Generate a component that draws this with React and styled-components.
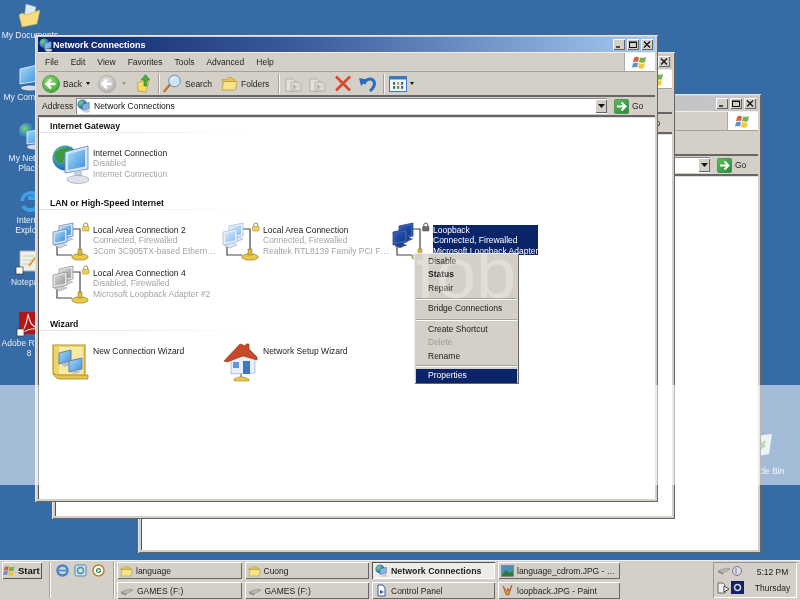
import React from 'react';
import styled, { createGlobalStyle } from 'styled-components';

const Global = createGlobalStyle`
  html, body { margin: 0; padding: 0; background: #376ba6; }
  body { width: 800px; height: 600px; overflow: hidden; font-family: "Liberation Sans", Arial, sans-serif; font-size: 8.5px; color: #111; }
  svg { flex: none; }
`;

const Page = styled.div`
  width: 800px; height: 600px; display: flex; flex-direction: column; overflow: hidden; position: relative;
  filter: blur(0.35px);
`;
const Desktop = styled.div`
  position: relative; flex: 1; background: #376ba6; overflow: hidden;
`;
const Band = styled.div`
  position: absolute; left: 0; right: 0; top: 385px; height: 100px; background: rgba(255,255,255,.55); pointer-events: none; z-index: 20;
`;
const DeskIcon = styled.div`
  position: absolute; left: ${p => p.$x}px; top: ${p => p.$y}px; width: 62px; display: flex; flex-direction: column; align-items: center;
  color: #e8eef6; font-size: 8.5px; line-height: 10px; text-align: center;
  svg { margin-bottom: ${p => p.$gap ?? 5}px; }
`;

const Frame = styled.div`
  position: absolute; left: ${p => p.$x}px; top: ${p => p.$y}px; width: ${p => p.$w}px; height: ${p => p.$h}px; z-index: ${p => p.$z};
  box-sizing: border-box; display: flex; flex-direction: column; padding: 2px 3px 3px 3px; background: #d4d0c8;
  box-shadow: inset 1px 1px 0 #e6e6e6, inset -1px -1px 0 #666;
`;
const TitleBar = styled.div`
  height: 15px; flex: none; display: flex; align-items: center; padding: 0 2px 0 1px;
  background: ${p => p.$active ? 'linear-gradient(90deg,#0a246a 0%,#3f5f9f 45%,#a6caf0 100%)' : 'linear-gradient(90deg,#a8a8a8,#c8c8c8)'};
`;
const TitleText = styled.span`
  margin-left: 0; color: #fff; font-weight: bold; font-size: 9px; flex: 1; white-space: nowrap;
`;
const CapBtn = styled.div`
  width: 12px; height: 11px; margin-left: 2px; background: #d4d0c8; display: flex; align-items: center; justify-content: center;
  box-shadow: inset 1px 1px 0 #fff, inset -1px -1px 0 #666;
`;
const MenuBar = styled.div`
  height: 20px; flex: none; display: flex; align-items: center; gap: 12px; padding-left: 7px; box-sizing: border-box; border-bottom: 1px solid #a5a29a; border-top: 1px solid #eee; color: #222;
`;
const FlagBox = styled.div`
  margin-left: auto; width: 31px; height: 100%; background: #fff; display: flex; align-items: center; justify-content: center; border-left: 1px solid #aaa; box-sizing: border-box;
`;
const Toolbar = styled.div`
  height: 25px; flex: none; display: flex; align-items: center; padding-left: 4px; box-sizing: border-box; border-bottom: 2px solid #666;
`;
const Tool = styled.div`
  display: flex; align-items: center; margin-left: ${p => p.$ml ?? 0}px; flex: none;
`;
const ToolLabel = styled.span`
  width: ${p => p.$w}px; margin-left: 3px; white-space: nowrap; color: #222;
`;
const ToolSep = styled.div`
  width: 1px; height: 20px; margin-left: ${p => p.$ml}px; background: #a5a29a; box-shadow: 1px 0 0 #f4f4f4; flex: none;
`;
const Caret = styled.div`
  width: 0; height: 0; border: 2.5px solid transparent; border-top: 3px solid ${p => p.$c || '#111'}; border-bottom: 0; margin-left: ${p => p.$ml}px; flex: none;
`;
const AddressBar = styled.div`
  height: 20px; flex: none; display: flex; align-items: center; padding-left: 4px; box-sizing: border-box; border-bottom: 2px solid #666;
`;
const AddrLabel = styled.span`
  width: 34px; color: #222;
`;
const AddrInput = styled.div`
  width: 531px; height: 16px; box-sizing: border-box; background: #fff; display: flex; align-items: center; gap: 3px; padding-left: 1px; box-shadow: inset 1px 1px 0 #888;
`;
const Combo = styled.div`
  margin-left: auto; width: 12px; height: 14px; display: flex; align-items: center; justify-content: center; background: #d4d0c8; box-shadow: inset 1px 1px 0 #fff, inset -1px -1px 0 #666;
`;
const GoWrap = styled.div`
  display: flex; align-items: center; gap: 3px; margin-left: 7px; color: #222;
`;
const Content = styled.div`
  flex: 1; min-height: 0; background: #fff; box-sizing: border-box; padding-top: 2px; border-left: 1px solid #555; border-top: 1px solid #ddd; overflow: hidden;
`;
const Section = styled.section`
  margin-bottom: ${p => p.$mb ?? 9}px;
`;
const SectionHead = styled.div`
  height: 13px; box-sizing: border-box; font-weight: bold; font-size: 8.7px; line-height: 12px; padding-left: 11px; color: #111;
  background: linear-gradient(90deg,#dfe3ea 0%,#e8ebf0 40%,#fff 100%) left bottom / 205px 1px no-repeat;
`;
const ItemGrid = styled.div`
  display: grid; grid-template-columns: repeat(3, 170px); grid-auto-rows: 43px; padding: 12px 0 0 13px;
`;
const Item = styled.div`
  display: flex; align-items: flex-start; gap: 1px; min-width: 0;
`;
const ItemText = styled.div`
  margin-top: 3px; line-height: 10.4px; white-space: nowrap; color: ${p => p.$selected ? '#fff' : '#1a1a1a'};
  ${p => p.$selected ? 'width: 105px; height: 30px; background: #0a246a; box-sizing: border-box;' : ''}
`;
const Sub = styled.div`
  color: ${p => p.$selected ? '#fff' : '#a4a4a4'};
`;
const Menu = styled.div`
  position: absolute; left: 414px; top: 253px; width: 105px; height: 131px; box-sizing: border-box; background: #d4d0c8; padding: 1.5px 2px; overflow: hidden; z-index: 15;
  box-shadow: inset 1px 1px 0 #eee, inset -1px -1px 0 #666;
`;
const MenuItem = styled.div`
  height: 13.5px; line-height: 13.5px; padding-left: 12px; white-space: nowrap;
  font-weight: ${p => p.$bold ? 'bold' : 'normal'};
  color: ${p => p.$hot ? '#fff' : p.$off ? '#a09c94' : '#1a1a1a'};
  background: ${p => p.$hot ? '#0a246a' : 'transparent'};
`;
const MenuSep = styled.div`
  height: 1px; margin: ${p => p.$t ?? 3}px 0 ${p => p.$b ?? 3}px; background: #a5a29a; box-shadow: 0 1px 0 #fff;
`;
const Watermark = styled.span`
  position: absolute; left: 2px; top: -16px; font-size: 72px; line-height: 72px; color: rgba(255,255,255,.3); pointer-events: none;
`;
const Taskbar = styled.footer`
  height: 40px; flex: none; background: #d4d0c8; display: flex; align-items: flex-start; box-sizing: border-box; padding: 2px 3px 0 2px; box-shadow: inset 0 1px 0 #eee;
`;
const StartBtn = styled.div`
  width: 40px; height: 17px; display: flex; align-items: center; gap: 2px; padding-left: 1px; box-sizing: border-box; font-weight: bold; font-size: 9.5px; color: #111;
  box-shadow: inset 1px 1px 0 #fff, inset -1px -1px 0 #555;
`;
const TaskSep = styled.div`
  width: 1px; height: 36px; margin-left: ${p => p.$ml}px; background: #a5a29a; box-shadow: 1px 0 0 #fff; flex: none;
`;
const Quick = styled.div`
  display: flex; gap: 5px; margin: 2px 0 0 6px; width: 57px; flex: none;
`;
const TaskGrid = styled.div`
  display: grid; grid-template-columns: 127.5px 127.5px 126px 125px; grid-auto-rows: 17px; row-gap: 3px; margin-left: 3px; flex: none;
`;
const TaskBtn = styled.div`
  margin-right: 3px; display: flex; align-items: center; gap: 3px; padding-left: 3px; color: #222; white-space: nowrap; overflow: hidden; min-width: 0;
  font-weight: ${p => p.$active ? 'bold' : 'normal'};
  font-size: ${p => p.$active ? '8.8px' : '8.5px'};
  background: ${p => p.$active ? '#eeece8' : '#d4d0c8'};
  box-shadow: ${p => p.$active ? 'inset 1px 1px 0 #555, inset -1px -1px 0 #fff' : 'inset 1px 1px 0 #fff, inset -1px -1px 0 #666'};
`;
const Tray = styled.div`
  margin-left: auto; width: 84px; height: 36px; box-sizing: border-box; display: flex; box-shadow: inset 1px 1px 0 #999, inset -1px -1px 0 #fff;
`;
const TrayIcons = styled.div`
  width: 36px; padding: 3px 0 0 4px; display: grid; grid-template-columns: 14px 14px; grid-auto-rows: 16px;
`;
const Clock = styled.div`
  flex: 1; display: flex; flex-direction: column; align-items: center; gap: 6px; padding: 5px 5px 0 0; line-height: 10px; color: #222;
`;
const Defs = styled.svg`
  width: 0; height: 0; display: block;
`;

const tones = {
  blue: ['url(#mBlue)', '#d6e4f4', '#c9d4e4', '#4f78b0'],
  pale: ['url(#mPale)', '#eaf1fa', '#e2e6ef', '#9ab4d8'],
  grey: ['url(#mGrey)', '#e4e4e4', '#cfcfcf', '#8a8a8a'],
  navy: ['url(#mNavy)', '#3a62b4', '#27457f', '#14307a'],
};
const Mon = ({ x, y, s, f, b, o }) => (
  <g transform={`translate(${x} ${y})`}>
    <path d="M2 15l8-2 1 2 3 1-7 3-5-2z" fill={b} stroke="#7c889c" strokeWidth=".4" />
    <path d="M0 3 L14 0 V13 L0 16z" fill={f} stroke={o} strokeWidth=".7" />
    <path d="M2 4.300 L12 2.200 V11.500 L2 13.600z" fill={s} />
  </g>
);
const Net = ({ tone = 'blue', lockDark }) => {
  const [s, f, b, o] = tones[tone];
  return (
    <svg width="40" height="40" viewBox="0 0 40 40">
      <path d="M20 7H28V31M5 22V33H20" fill="none" stroke="#444" strokeWidth="1.200" />
      <Mon x={7} y={1} s={s} f={f} b={b} o={o} />
      <Mon x={1} y={7} s={s} f={f} b={b} o={o} />
      <path d="M20 34l4-2h8l4 2v2l-4 2h-8l-4-2z" fill="#e8c94a" stroke="#8a7420" strokeWidth=".6" />
      <rect x="26" y="27" width="4" height="6" fill="#d9b93a" stroke="#8a7420" strokeWidth=".5" />
      <path d="M31.800 4.500V3a2 2 0 014 0v1.500" fill="none" stroke={lockDark ? '#555' : '#9a8a3a'} strokeWidth="1" />
      <rect x="30.500" y="4.500" width="6.500" height="4.500" rx=".6" fill={lockDark ? '#6b6b6b' : '#f0cf5a'} stroke={lockDark ? '#444' : '#9a8020'} strokeWidth=".5" />
    </svg>
  );
};
const GlobeMon = () => (
  <svg width="40" height="40" viewBox="0 0 40 40">
    <circle cx="13" cy="13" r="12.500" fill="url(#globe)" />
    <path d="M3 8c5-5 11-6 15-4-2 4-1 6-5 8-2 2-1 7-5 6-4-2-6-6-5-10z" fill="#3b9a3f" />
    <path d="M13 7 L36 1 V24 L13 28z" fill="#d6e4f4" stroke="#5d85b8" strokeWidth=".8" />
    <path d="M16 9 L33 4.500 V21.500 L16 25z" fill="url(#mBlue)" />
    <path d="M22 27l8-2v6l-8 2z" fill="#c3cedd" />
    <ellipse cx="26" cy="34.500" rx="11" ry="4" fill="#dfe2ea" stroke="#9098a8" strokeWidth=".6" />
  </svg>
);
const WizardBook = () => (
  <svg width="40" height="40" viewBox="0 0 40 40">
    <path d="M1 2H33V34H5L1 30z" fill="#eed36a" stroke="#b29a28" strokeWidth="1.200" />
    <path d="M1 30c2 6 6 6 8 6H36V32H8c-3 0-5 0-7-2z" fill="#e3c44c" stroke="#a48c20" strokeWidth=".8" />
    <path d="M7 4H31V31H7z" fill="#f6eaa6" />
    <path d="M7 10l12-3v11l-12 3z" fill="url(#mBlue)" stroke="#6a7e9a" />
    <path d="M10 21l6-2 3 3-7 2z" fill="#bdbdc6" />
    <path d="M17 18l13-3v11l-13 3z" fill="url(#mBlue)" stroke="#6a7e9a" />
    <path d="M20 29l6-2 3 2-7 2z" fill="#bdbdc6" />
  </svg>
);
const House = () => (
  <svg width="40" height="40" viewBox="0 0 40 40">
    <path d="M9 16L21 10 33 15V30L9 31z" fill="#e9eefa" stroke="#8ea0c0" strokeWidth=".6" />
    <path d="M2 18 L18 1 L24 3V1h3v5l8 8v3l-14-4-16 6z" fill="#c8492a" stroke="#8a2e18" strokeWidth=".6" />
    <rect x="21" y="18" width="7" height="13" fill="#3c78c0" />
    <rect x="11" y="19" width="6" height="6" fill="#5d99d8" />
    <path d="M19 31v4" stroke="#888" strokeWidth="1.500" />
    <path d="M12 36l5-2h5l5 2v2H12z" fill="#e8c94a" stroke="#8a7420" strokeWidth=".5" />
  </svg>
);
const NetConn = ({ s = 14 }) => (
  <svg width={s} height={s} viewBox="0 0 16 16">
    <circle cx="6" cy="6" r="5.500" fill="url(#globe)" />
    <path d="M6 6l8-2v7l-8 2z" fill="#7fb6e8" stroke="#456" strokeWidth=".6" />
    <ellipse cx="11" cy="14" rx="4" ry="1.600" fill="#ccd" />
  </svg>
);
const Flag = ({ s = 16 }) => (
  <svg width={s} height={s} viewBox="0 0 16 16">
    <path d="M2 4c2-2 3-1 5-.5L6 8C4 7.500 3 7.500 1 8.500z" fill="#d9623a" />
    <path d="M8 3.500c2 .5 3 .5 6-.5l-1 5c-2 1-3 1-6 0z" fill="#7bb04a" />
    <path d="M1 9.500c2-1 3-1 5-.5l-1 4.500c-2-1-3-.5-5 0z" fill="#5a8fd8" />
    <path d="M7 9c2 1 4 1 6 0l-1 5c-2 1-4 1-6-.5z" fill="#f0c83a" />
  </svg>
);
const RoundArrow = ({ active, dir = 'left' }) => (
  <svg width="18" height="18" viewBox="0 0 18 18">
    <circle cx="9" cy="9" r="8.500" fill={active ? 'url(#gBack)' : 'url(#gFwd)'} stroke={active ? '#2f8a2f' : '#a0a0a0'} strokeWidth=".7" />
    <path d={dir === 'left' ? 'M13.500 9H5M9 4.500L4.500 9 9 13.500' : 'M4.500 9H13M9 4.500L13.500 9 9 13.500'} fill="none" stroke="#fff" strokeWidth="2.400" />
  </svg>
);
const UpFolder = () => (
  <svg width="15" height="19" viewBox="0 0 15 19">
    <path d="M1 9l9-3 3 1-3 11-8-1z" fill="#f4dc6a" stroke="#b89a2a" strokeWidth=".7" />
    <path d="M8 12V6H5l4.500-5.500L14 6h-3v6z" fill="#4fa83c" stroke="#2c7a20" strokeWidth=".5" />
  </svg>
);
const Search = () => (
  <svg width="19" height="19" viewBox="0 0 19 19">
    <path d="M7 10.500L1.500 17" stroke="#c8702a" strokeWidth="2.500" strokeLinecap="round" />
    <circle cx="11.500" cy="7" r="5.800" fill="#cfe6f6" stroke="#6d8eae" strokeWidth="1" />
    <path d="M8 6c1-2 2-3 4-3" stroke="#fff" strokeWidth="1" fill="none" />
  </svg>
);
const FolderIcon = ({ w = 17, h = 15 }) => (
  <svg width={w} height={h} viewBox="0 0 17 15">
    <path d="M1 3.500h5l1-2h4l1 2h2v2H1z" fill="#e2c650" stroke="#a98f2a" strokeWidth=".5" />
    <path d="M1 14L2.500 5.500H16L14.500 14z" fill="#f7e48a" stroke="#b09428" strokeWidth=".7" />
  </svg>
);
const PaleDoc = () => (
  <svg width="18" height="18" viewBox="0 0 18 18">
    <path d="M2 4h7l3 3v9H2z" fill="#e4e2dc" stroke="#a9a69e" strokeWidth=".8" />
    <path d="M7 7h7l3 3v6H7z" fill="#dcdad4" stroke="#a9a69e" strokeWidth=".8" />
    <path d="M9 9l4 3-4 3z" fill="#b5b3ac" />
  </svg>
);
const RedX = () => (
  <svg width="18" height="17" viewBox="0 0 18 17">
    <path d="M2 1.500L16 15.500M16 1.500L2 15.500" stroke="#d8482a" strokeWidth="2.600" />
  </svg>
);
const Undo = () => (
  <svg width="19" height="18" viewBox="0 0 19 18">
    <path d="M6 9C8 4 12 3 15 5c3 3 1 8-3 11" fill="none" stroke="#2b6cc4" strokeWidth="3" />
    <path d="M1 3l8 1.500L3 11z" fill="#2b6cc4" />
  </svg>
);
const Views = () => (
  <svg width="18" height="16" viewBox="0 0 18 16">
    <rect x=".5" y=".5" width="17" height="15" fill="#f2f6fb" stroke="#3d78b8" />
    <rect x=".5" y=".5" width="17" height="3" fill="#3d78b8" />
    {[4, 8, 12].map(x => [6, 10].map((y, i) => (
      <rect key={`${x}${y}`} x={x} y={y} width="2.200" height="2.800" fill={x === 8 ? (i ? '#3aa050' : '#d0a030') : '#3a6a9a'} />
    )))}
  </svg>
);
const GoIcon = () => (
  <svg width="15" height="15" viewBox="0 0 15 15">
    <rect x=".5" y=".5" width="14" height="14" rx="1.500" fill="url(#gGo)" stroke="#2a7a32" strokeWidth=".6" />
    <path d="M3 7.500H11M7.500 3.500L11.500 7.500 7.500 11.500" stroke="#fff" strokeWidth="2" fill="none" />
  </svg>
);
const Drive = () => (
  <svg width="14" height="10" viewBox="0 0 14 10">
    <path d="M1 6l8-3 4 1-7 4z" fill="#bbb" stroke="#777" strokeWidth=".5" />
    <path d="M1 6l5 2v1.500L1 7.500z" fill="#888" />
  </svg>
);
const Xglyph = () => <svg width="8" height="7" viewBox="0 0 8 7"><path d="M1 .5L7 6.500M7 .5L1 6.500" stroke="#111" strokeWidth="1.300" /></svg>;
const Minglyph = () => <svg width="8" height="7" viewBox="0 0 8 7"><path d="M1 6H5" stroke="#111" strokeWidth="1.400" /></svg>;
const Maxglyph = () => <svg width="8" height="7" viewBox="0 0 8 7"><rect x=".5" y="1" width="7" height="5.500" fill="none" stroke="#111" /><path d="M.5 1.500H7.500" stroke="#111" /></svg>;

const Window = ({ x, y, h, z, active, title, children }) => (
  <Frame $x={x} $y={y} $w={623} $h={h} $z={z}>
    <TitleBar $active={active}>
      <NetConn />
      <TitleText>{title}</TitleText>
      <CapBtn><Minglyph /></CapBtn>
      <CapBtn><Maxglyph /></CapBtn>
      <CapBtn><Xglyph /></CapBtn>
    </TitleBar>
    <MenuBar>
      {['File', 'Edit', 'View', 'Favorites', 'Tools', 'Advanced', 'Help'].map(m => <span key={m}>{m}</span>)}
      <FlagBox><Flag /></FlagBox>
    </MenuBar>
    <Toolbar>
      <Tool><RoundArrow active /><ToolLabel $w={17}>Back</ToolLabel></Tool>
      <Caret $ml={6} />
      <Tool $ml={8}><RoundArrow /></Tool>
      <Caret $c="#999" $ml={6} />
      <Tool $ml={10}><UpFolder /></Tool>
      <ToolSep $ml={7} />
      <Tool $ml={4}><Search /><ToolLabel $w={26}>Search</ToolLabel></Tool>
      <Tool $ml={10}><FolderIcon /><ToolLabel $w={28}>Folders</ToolLabel></Tool>
      <ToolSep $ml={9} />
      <Tool $ml={5}><PaleDoc /></Tool>
      <Tool $ml={6}><PaleDoc /></Tool>
      <Tool $ml={8}><RedX /></Tool>
      <Tool $ml={6}><Undo /></Tool>
      <ToolSep $ml={6} />
      <Tool $ml={5}><Views /></Tool>
      <Caret $ml={3} />
    </Toolbar>
    <AddressBar>
      <AddrLabel>Address</AddrLabel>
      <AddrInput>
        <NetConn />
        <span>{title}</span>
        <Combo><svg width="7" height="4" viewBox="0 0 7 4"><path d="M0 0h7L3.500 4z" fill="#111" /></svg></Combo>
      </AddrInput>
      <GoWrap><GoIcon /><span>Go</span></GoWrap>
    </AddressBar>
    <Content>{children}</Content>
  </Frame>
);

const Conn = ({ tone, name, l2, l3, selected, lockDark }) => (
  <Item>
    <Net tone={tone} lockDark={lockDark} />
    <ItemText $selected={selected}>
      {name}
      <Sub $selected={selected}>{l2}</Sub>
      <Sub $selected={selected}>{l3}</Sub>
    </ItemText>
  </Item>
);

export default function App() {
  return (
    <Page>
      <Global />
      <Defs>
        <defs>
          <linearGradient id="mBlue" x1="0" y1="0" x2="1" y2="1"><stop offset="0" stopColor="#a6dcf8" /><stop offset="1" stopColor="#3f8fdc" /></linearGradient>
          <linearGradient id="mPale" x1="0" y1="0" x2="1" y2="1"><stop offset="0" stopColor="#dcecfa" /><stop offset="1" stopColor="#8cbcec" /></linearGradient>
          <linearGradient id="mGrey" x1="0" y1="0" x2="1" y2="1"><stop offset="0" stopColor="#d8d8d8" /><stop offset="1" stopColor="#969696" /></linearGradient>
          <linearGradient id="mNavy" x1="0" y1="0" x2="1" y2="1"><stop offset="0" stopColor="#2f5cb8" /><stop offset="1" stopColor="#12358a" /></linearGradient>
          <radialGradient id="globe" cx=".35" cy=".35" r=".8"><stop offset="0" stopColor="#7fd07f" /><stop offset=".6" stopColor="#2d7fc0" /><stop offset="1" stopColor="#1a4d8a" /></radialGradient>
          <radialGradient id="gBack" cx=".4" cy=".35" r=".8"><stop offset="0" stopColor="#9be07a" /><stop offset="1" stopColor="#2d9a2d" /></radialGradient>
          <radialGradient id="gFwd" cx=".4" cy=".35" r=".8"><stop offset="0" stopColor="#e8e8e8" /><stop offset="1" stopColor="#a8a8a8" /></radialGradient>
          <linearGradient id="gGo" x1="0" y1="0" x2="1" y2="1"><stop offset="0" stopColor="#5cc05c" /><stop offset="1" stopColor="#218a38" /></linearGradient>
        </defs>
      </Defs>
      <Desktop>
        <DeskIcon $x={-1} $y={2} $gap={2}>
          <svg width="24" height="26" viewBox="0 0 24 26">
            <path d="M8 2l10 3-2 12H6z" fill="#dfe9f6" stroke="#9ab" strokeWidth=".5" />
            <path d="M1 13l3-2 4 2 14-5-3 14-15 3z" fill="#f5dd80" stroke="#c4a43a" strokeWidth=".6" />
          </svg>
          <span>My Documents</span>
        </DeskIcon>
        <DeskIcon $x={-2} $y={63} $gap={1}>
          <svg width="24" height="28" viewBox="0 0 24 28">
            <path d="M3 6l18-4v16L3 21z" fill="url(#mBlue)" stroke="#d6e4f4" />
            <ellipse cx="13" cy="25" rx="9" ry="2.500" fill="#d5dbe5" />
          </svg>
          <span>My Computer</span>
        </DeskIcon>
        <DeskIcon $x={0} $y={122} $gap={3}>
          <svg width="26" height="28" viewBox="0 0 26 28">
            <circle cx="9" cy="9" r="8" fill="url(#globe)" />
            <path d="M9 10l15-3v13L9 22z" fill="url(#mBlue)" stroke="#d6e4f4" />
            <ellipse cx="17" cy="25" rx="8" ry="2.500" fill="#d5dbe5" />
          </svg>
          <span>My Network<br />Places</span>
        </DeskIcon>
        <DeskIcon $x={0} $y={188} $gap={1}>
          <svg width="26" height="26" viewBox="0 0 26 26">
            <path d="M4 13a9 9 0 0 1 17-3H10M21 16a9 9 0 0 1-16 2" fill="none" stroke="#3f9fe6" strokeWidth="4" />
          </svg>
          <span>Internet<br />Explorer</span>
        </DeskIcon>
        <DeskIcon $x={-4} $y={249} $gap={2}>
          <svg width="24" height="26" viewBox="0 0 24 26">
            <path d="M5 2h17v20H5z" fill="#f1efe6" stroke="#aaa" />
            <path d="M8 7h11M8 11h11M8 15h8" stroke="#bcb" />
            <path d="M14 17l9-12" stroke="#d9a030" strokeWidth="2" />
            <rect x="1" y="18" width="7" height="7" fill="#fff" stroke="#333" strokeWidth=".7" />
          </svg>
          <span>Notepad</span>
        </DeskIcon>
        <DeskIcon $x={-2} $y={311} $gap={1}>
          <svg width="26" height="26" viewBox="0 0 26 26">
            <rect x="3" y="1" width="23" height="22" fill="#b01818" />
            <path d="M12 3c2 8 2 10 10 15M22 18c-6-1-10 0-16 4M6 22c3-6 5-9 6-18" fill="none" stroke="#f3dada" strokeWidth="1.200" />
            <rect x="1" y="18" width="7" height="7" fill="#fff" stroke="#333" strokeWidth=".7" />
          </svg>
          <span>Adobe Reader<br />8</span>
        </DeskIcon>
        <DeskIcon $x={731} $y={433} $gap={9}>
          <svg width="24" height="24" viewBox="0 0 24 24">
            <path d="M6 3l16-2-3 20-10 2z" fill="#d8e8f0" />
            <path d="M10 9l5 5M15 8l-4 8" stroke="#5aa84a" strokeWidth="2" />
          </svg>
          <span>Recycle Bin</span>
        </DeskIcon>

        <Window x={138} y={94} h={459} z={1} title="language" />
        <Window x={52} y={52} h={467} z={2} title="Control Panel" />
        <Window x={35} y={35} h={467} z={3} active title="Network Connections">
          <Section>
            <SectionHead>Internet Gateway</SectionHead>
            <ItemGrid>
              <Item>
                <GlobeMon />
                <ItemText>Internet Connection<Sub>Disabled</Sub><Sub>Internet Connection</Sub></ItemText>
              </Item>
            </ItemGrid>
          </Section>
          <Section $mb={10}>
            <SectionHead>LAN or High-Speed Internet</SectionHead>
            <ItemGrid>
              <Conn tone="blue" name="Local Area Connection 2" l2="Connected, Firewalled" l3="3Com 3C905TX-based Ethern…" />
              <Conn tone="pale" name="Local Area Connection" l2="Connected, Firewalled" l3="Realtek RTL8139 Family PCI F…" />
              <Conn tone="navy" lockDark selected name="Loopback" l2="Connected, Firewalled" l3="Microsoft Loopback Adapter" />
              <Conn tone="grey" name="Local Area Connection 4" l2="Disabled, Firewalled" l3="Microsoft Loopback Adapter #2" />
            </ItemGrid>
          </Section>
          <Section>
            <SectionHead>Wizard</SectionHead>
            <ItemGrid>
              <Item><WizardBook /><ItemText>New Connection Wizard</ItemText></Item>
              <Item><House /><ItemText>Network Setup Wizard</ItemText></Item>
            </ItemGrid>
          </Section>
        </Window>

        <Menu>
          <MenuItem>Disable</MenuItem>
          <MenuItem $bold>Status</MenuItem>
          <MenuItem>Repair</MenuItem>
          <MenuSep />
          <MenuItem>Bridge Connections</MenuItem>
          <MenuSep />
          <MenuItem>Create Shortcut</MenuItem>
          <MenuItem $off>Delete</MenuItem>
          <MenuItem>Rename</MenuItem>
          <MenuSep $t={2} $b={3} />
          <MenuItem $hot>Properties</MenuItem>
          <Watermark>fob</Watermark>
        </Menu>
        <Band />
      </Desktop>
      <Taskbar>
        <StartBtn><Flag s={13} />Start</StartBtn>
        <TaskSep $ml={7} />
        <Quick>
          <svg width="13" height="13" viewBox="0 0 13 13"><circle cx="6.500" cy="6.500" r="5" fill="none" stroke="#3f86d8" strokeWidth="2.500" /><path d="M3 6.500h7" stroke="#3f86d8" strokeWidth="1.500" /></svg>
          <svg width="13" height="13" viewBox="0 0 13 13"><rect x="1" y="1" width="11" height="11" rx="1.500" fill="#cfe1f2" stroke="#4d88c0" /><circle cx="6.500" cy="6.500" r="3" fill="none" stroke="#3f9a8a" strokeWidth="1.300" /></svg>
          <svg width="13" height="13" viewBox="0 0 13 13"><circle cx="6.500" cy="6.500" r="5.500" fill="#fff" stroke="#c8802a" strokeWidth="1.500" /><circle cx="6.500" cy="6.500" r="2.500" fill="#2a7a4a" /><path d="M5.500 4.500l3 2-3 2z" fill="#fff" /></svg>
        </Quick>
        <TaskSep $ml={0} />
        <TaskGrid>
          <TaskBtn><FolderIcon w={13} h={12} />language</TaskBtn>
          <TaskBtn><FolderIcon w={13} h={12} />Cuong</TaskBtn>
          <TaskBtn $active><NetConn s={13} />Network Connections</TaskBtn>
          <TaskBtn>
            <svg width="13" height="12" viewBox="0 0 13 12"><rect x=".5" y=".5" width="12" height="11" fill="#4a90b8" stroke="#777" strokeWidth=".6" /><path d="M1 10l4-5 3 3 4-2v5H1z" fill="#2f7a3a" /></svg>
            language_cdrom.JPG - …
          </TaskBtn>
          <TaskBtn><Drive />GAMES (F:)</TaskBtn>
          <TaskBtn><Drive />GAMES (F:)</TaskBtn>
          <TaskBtn>
            <svg width="13" height="13" viewBox="0 0 13 13"><path d="M3 1h5l2 3v8H3z" fill="#fff" stroke="#3a5a9a" /><path d="M5 6l4 2-4 2z" fill="#3a5a9a" /></svg>
            Control Panel
          </TaskBtn>
          <TaskBtn>
            <svg width="13" height="13" viewBox="0 0 13 13"><path d="M2 2l3 9h3l3-10-3 6-1-3-1 3z" fill="#c89a3a" stroke="#b03a2a" strokeWidth=".6" /></svg>
            loopback.JPG - Paint
          </TaskBtn>
        </TaskGrid>
        <Tray>
          <TrayIcons>
            <Drive />
            <svg width="12" height="12" viewBox="0 0 12 12"><circle cx="6" cy="6" r="4.500" fill="#dde" stroke="#778" /><path d="M5 3v6" stroke="#778" /></svg>
            <svg width="13" height="13" viewBox="0 0 13 13"><path d="M1 2h5l2 2v8H1z" fill="#eee" stroke="#666" /><path d="M7 5l5 3-5 3z" fill="#fff" stroke="#444" /></svg>
            <svg width="13" height="13" viewBox="0 0 13 13"><rect width="13" height="13" fill="#14206a" /><circle cx="6.500" cy="6.500" r="3" fill="none" stroke="#cde" strokeWidth="1.500" /></svg>
          </TrayIcons>
          <Clock><span>5:12 PM</span><span>Thursday</span></Clock>
        </Tray>
      </Taskbar>
    </Page>
  );
}
